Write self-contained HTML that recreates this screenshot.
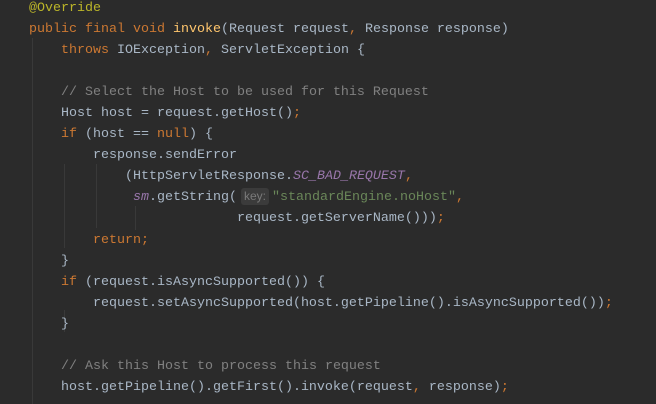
<!DOCTYPE html>
<html><head><style>
html,body{margin:0;padding:0;background:#2b2b2b;width:656px;height:404px;overflow:hidden}
pre{position:absolute;left:29px;top:-2px;margin:0;font-family:"Liberation Mono","DejaVu Sans Mono",monospace;font-size:13.33px;line-height:21.05px;color:#a9b7c6}
.k{color:#cc7832}.a{color:#bbb529}.c{color:#808080}.s{color:#6a8759}.f{color:#9876aa;font-style:italic}.m{color:#ffc66d}
.h{display:inline-block;background:#3b3b3b;color:#7a7a7a;border-radius:3px;padding:0 3px;line-height:17px;margin:0 3px 0 4px;font-family:"Liberation Sans",sans-serif;font-size:12px}
.g{position:absolute;width:1px;background:#393939}
</style></head><body>
<div class="g" style="left:32px;top:38px;height:366px"></div>
<div class="g" style="left:64px;top:164px;height:84px"></div>
<div class="g" style="left:64px;top:310px;height:22px"></div>
<div class="g" style="left:96px;top:164px;height:64px"></div>
<div class="g" style="left:135px;top:206px;height:24px"></div>
<pre><span class="a">@Override</span>
<span class="k">public final void </span><span class="m">invoke</span>(Request request<span class="k">, </span>Response response)
    <span class="k">throws </span>IOException<span class="k">, </span>ServletException {

    <span class="c">// Select the Host to be used for this Request</span>
    Host host = request.getHost()<span class="k">;</span>
    <span class="k">if </span>(host == <span class="k">null</span>) {
        response.sendError
            (HttpServletResponse.<span class="f">SC_BAD_REQUEST</span><span class="k">,</span>
             <span class="f">sm</span>.getString(<span class="h">key:</span><span class="s">"standardEngine.noHost"</span><span class="k">,</span>
                          request.getServerName()))<span class="k">;</span>
        <span class="k">return;</span>
    }
    <span class="k">if </span>(request.isAsyncSupported()) {
        request.setAsyncSupported(host.getPipeline().isAsyncSupported())<span class="k">;</span>
    }

    <span class="c">// Ask this Host to process this request</span>
    host.getPipeline().getFirst().invoke(request<span class="k">, </span>response)<span class="k">;</span>
</pre>
</body></html>
